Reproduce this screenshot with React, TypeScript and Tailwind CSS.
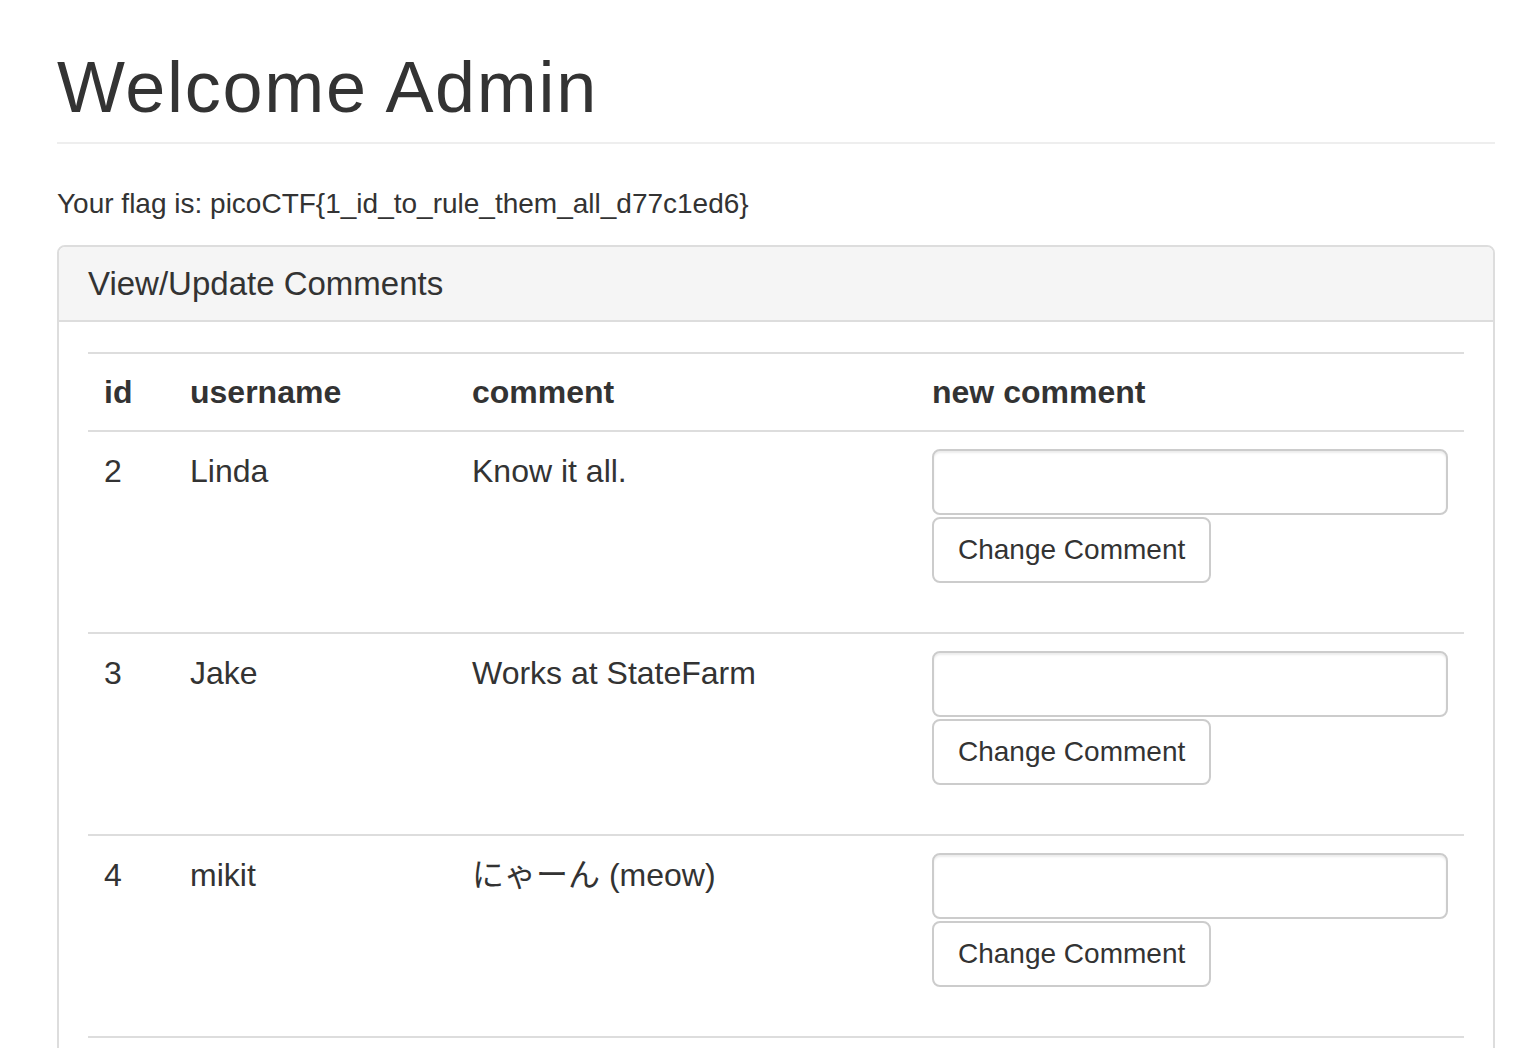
const rows = [
  { id: 2, username: 'Linda', comment: 'Know it all.' },
  { id: 3, username: 'Jake', comment: 'Works at StateFarm' },
  { id: 4, username: 'mikit', comment: 'にゃーん (meow)' },
]

const font = "font-['Liberation_Sans','Noto_Sans_CJK_JP',Arial,sans-serif]"

function CommentRow({ id, username, comment }: { id: number; username: string; comment: string }) {
  return (
    <div className="grid grid-cols-[86px_282px_460px_1fr] h-[202px] border-b-2 border-[#ddd] text-[32px]">
      <div className="px-[16px] pt-[16px] leading-[46px]">{id}</div>
      <div className="px-[16px] pt-[16px] leading-[46px]">{username}</div>
      <div className="px-[16px] pt-[16px] leading-[46px]">{comment}</div>
      <div className="px-[16px] pt-[17px]">
        <input
          type="text"
          className="block w-full h-[66px] rounded-[8px] border-2 border-[#ccc] bg-white px-[24px] text-[28px] shadow-[inset_0_2px_2px_rgba(0,0,0,0.075)] outline-none"
        />
        <button
          type="button"
          className="mt-[2px] block h-[66px] rounded-[8px] border-2 border-[#ccc] bg-white px-[24px] text-[28px] leading-[40px] text-[#333]"
        >
          Change Comment
        </button>
      </div>
    </div>
  )
}

export default function App() {
  return (
    <div className={`${font} min-h-screen bg-white pl-[57px] pr-[39px] text-[28px] text-[#333]`}>
      <h1 className="pt-[47px] text-[72px] font-medium leading-[80px] tracking-[1.7px]">Welcome Admin</h1>
      <hr className="mt-[15px] border-0 border-t-2 border-[#eee]" />
      <p className="mt-[40px] leading-[40px]">Your flag is: picoCTF{'{'}1_id_to_rule_them_all_d77c1ed6{'}'}</p>

      <div className="mt-[21px] rounded-[8px] border-2 border-[#ddd] bg-white">
        <div className="rounded-t-[6px] border-b-2 border-[#ddd] bg-[#f5f5f5] px-[29px] py-[19px] text-[33px] leading-[35px]">
          View/Update Comments
        </div>
        <div className="px-[29px] pt-[30px] pb-[30px]">
          <div className="border-t-2 border-[#ddd]">
            <div className="grid grid-cols-[86px_282px_460px_1fr] border-b-2 border-[#ddd] text-[32px] font-bold">
              <div className="px-[16px] py-[15px] leading-[46px]">id</div>
              <div className="px-[16px] py-[15px] leading-[46px]">username</div>
              <div className="px-[16px] py-[15px] leading-[46px]">comment</div>
              <div className="px-[16px] py-[15px] leading-[46px]">new comment</div>
            </div>
            {rows.map((r) => (
              <CommentRow key={r.id} {...r} />
            ))}
          </div>
        </div>
      </div>
    </div>
  )
}
